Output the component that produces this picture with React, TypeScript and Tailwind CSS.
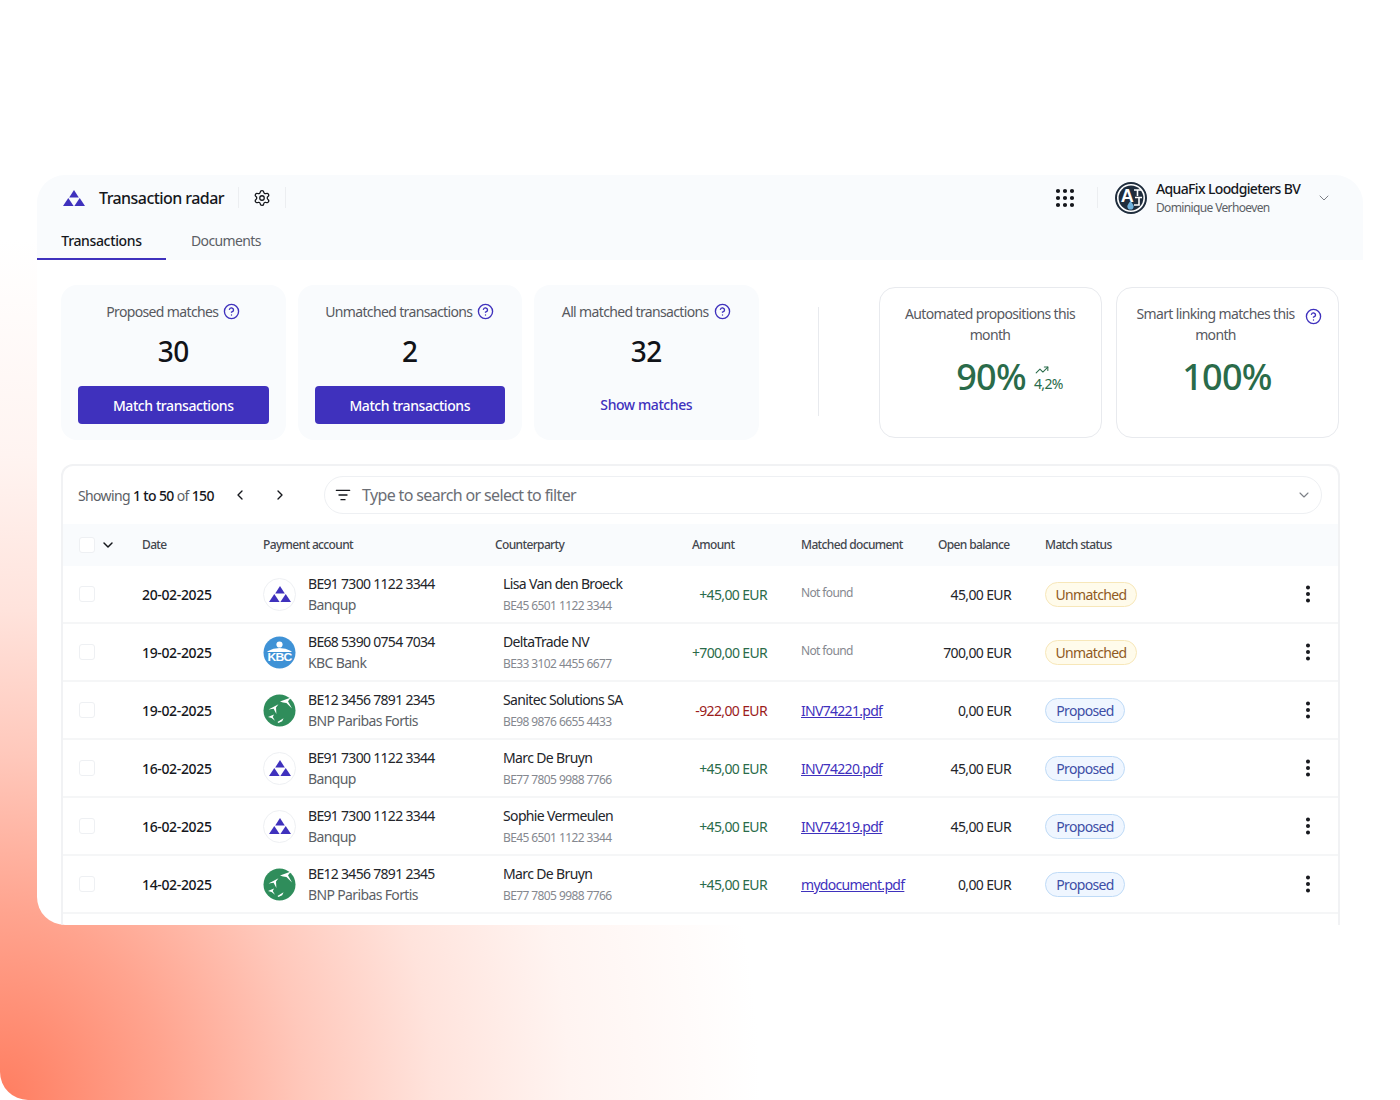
import { ChevronDown, ChevronLeft, ChevronRight, CircleHelp, EllipsisVertical, Grip, ListFilter, Settings, TrendingUp } from "lucide-react";

type Bank = "banqup" | "kbc" | "bnp";

type Row = {
  date: string;
  iban: string;
  bank: Bank;
  party: string;
  partyIban: string;
  amount: string;
  doc: string | null;
  balance: string;
  status: "Unmatched" | "Proposed";
};

const bankNames: Record<Bank, string> = {
  banqup: "Banqup",
  kbc: "KBC Bank",
  bnp: "BNP Paribas Fortis",
};

const rows: Row[] = [
  { date: "20-02-2025", iban: "BE91 7300 1122 3344", bank: "banqup", party: "Lisa Van den Broeck", partyIban: "BE45 6501 1122 3344", amount: "+45,00 EUR", doc: null, balance: "45,00 EUR", status: "Unmatched" },
  { date: "19-02-2025", iban: "BE68 5390 0754 7034", bank: "kbc", party: "DeltaTrade NV", partyIban: "BE33 3102 4455 6677", amount: "+700,00 EUR", doc: null, balance: "700,00 EUR", status: "Unmatched" },
  { date: "19-02-2025", iban: "BE12 3456 7891 2345", bank: "bnp", party: "Sanitec Solutions SA", partyIban: "BE98 9876 6655 4433", amount: "-922,00 EUR", doc: "INV74221.pdf", balance: "0,00 EUR", status: "Proposed" },
  { date: "16-02-2025", iban: "BE91 7300 1122 3344", bank: "banqup", party: "Marc De Bruyn", partyIban: "BE77 7805 9988 7766", amount: "+45,00 EUR", doc: "INV74220.pdf", balance: "45,00 EUR", status: "Proposed" },
  { date: "16-02-2025", iban: "BE91 7300 1122 3344", bank: "banqup", party: "Sophie Vermeulen", partyIban: "BE45 6501 1122 3344", amount: "+45,00 EUR", doc: "INV74219.pdf", balance: "45,00 EUR", status: "Proposed" },
  { date: "14-02-2025", iban: "BE12 3456 7891 2345", bank: "bnp", party: "Marc De Bruyn", partyIban: "BE77 7805 9988 7766", amount: "+45,00 EUR", doc: "mydocument.pdf", balance: "0,00 EUR", status: "Proposed" },
];

const columns = "grid grid-cols-[79px_121px_232px_197px_109px_137px_107px_1fr]";

function BanqupMark({ className }: { className: string }) {
  return (
    <svg viewBox="0 0 22 16" className={className} fill="#3f31bd">
      <polygon points="11,0 15.8,7.5 6.2,7.5" />
      <polygon points="5.3,8 10.6,16 0,16" />
      <polygon points="16.7,8 22,16 11.4,16" />
    </svg>
  );
}

function BankLogo({ bank }: { bank: Bank }) {
  if (bank === "banqup") {
    return (
      <div className="flex h-[33px] w-[33px] shrink-0 items-center justify-center rounded-full border border-[#eef0f3] bg-white">
        <BanqupMark className="h-[16px] w-[22px]" />
      </div>
    );
  }
  if (bank === "kbc") {
    return (
      <svg viewBox="0 0 33 33" className="h-[33px] w-[33px] shrink-0">
        <circle cx="16.5" cy="16.5" r="16" fill="#3f92d6" />
        <circle cx="16.5" cy="8.5" r="3.1" fill="#fff" />
        <path d="M4.5 15.2 Q16.5 9 28.5 15.2 L28.5 16 L4.5 16 Z" fill="#fff" />
        <text x="16.5" y="24.6" textAnchor="middle" textLength="24" lengthAdjust="spacingAndGlyphs" fontFamily="'Liberation Sans', sans-serif" fontWeight="700" fontSize="10" fill="#fff">KBC</text>
      </svg>
    );
  }
  return (
    <svg viewBox="0 0 33 33" className="h-[33px] w-[33px] shrink-0">
      <circle cx="16.5" cy="16.5" r="16" fill="#2f8d5b" />
      <g fill="#fff">
        <path d="M17 7.5 L28 3.5 L25 7.2 L29 14.5 L23.4 9 L20 8.6 Z" />
        <path d="M5.5 15.5 L15.5 10.2 L13 13.6 L13.4 20 L10.6 14.8 Z" />
        <path d="M5 23 L11 20.6 L9.8 23 L12 26.8 L8.6 24 Z" />
        <path d="M14.5 28 L20.5 24.2 L19.2 27.2 L15.4 29 Z" />
      </g>
    </svg>
  );
}

function AquaFixAvatar() {
  return (
    <svg viewBox="0 0 32 32" className="h-[32px] w-[32px] shrink-0">
      <circle cx="16" cy="16" r="15" fill="#fff" stroke="#1f2d3d" strokeWidth="2" />
      <circle cx="16" cy="16" r="12.4" fill="#1f2d3d" />
      <text x="12" y="20" textAnchor="middle" fontFamily="'Liberation Sans', sans-serif" fontWeight="700" fontSize="18" fill="#fff">A</text>
      <path d="M19 8 H26 M22.5 8 V14 M20 15.5 H27 M24 15.5 V23 H19" fill="none" stroke="#fff" strokeWidth="1.6" />
      <path d="M15.5 19 C17.6 21.6 18.6 23 18.6 24.4 A3.1 3.1 0 0 1 12.4 24.4 C12.4 23 13.4 21.6 15.5 19 Z" fill="#6fb1dc" />
    </svg>
  );
}

function Help({ className = "" }: { className?: string }) {
  return <CircleHelp className={`h-[17px] w-[17px] shrink-0 text-[#3f31bd] ${className}`} strokeWidth={1.9} />;
}

function StatCard({ title, value, action }: { title: string; value: string; action: "button" | "link" }) {
  return (
    <div className="flex h-[155px] w-[224.5px] shrink-0 flex-col items-center rounded-2xl bg-[#f9fbfd] px-[17px] pt-[15px]">
      <div className="flex h-[22px] items-center gap-[5px] text-[14px] text-[#57595f]">
        <span>{title}</span>
        <Help />
      </div>
      <div className="mt-[11px] h-[36px] text-[28px] leading-[36px] font-medium tracking-[-0.02em] text-[#111318]">{value}</div>
      {action === "button" ? (
        <button className="mt-[17px] h-[38px] w-full rounded-[4px] bg-[#3f31bd] text-[14px] font-medium tracking-[-0.03em] text-white">Match transactions</button>
      ) : (
        <div className="mt-[17px] flex h-[38px] items-center pb-[1px] text-[14px] font-medium tracking-[-0.03em] text-[#3f31bd]">Show matches</div>
      )}
    </div>
  );
}

function TableRow({ row }: { row: Row }) {
  const negative = row.amount.startsWith("-");
  return (
    <div className={`${columns} h-[58px] items-center border-b-2 border-[#f5f6f7] whitespace-nowrap`}>
      <div className="pl-[16px]">
        <div className="h-[16px] w-[16px] rounded-[3px] border border-[#eef0f3] bg-white" />
      </div>
      <div className="text-[14px] font-medium tracking-[-0.025em] text-[#15171c]">{row.date}</div>
      <div className="flex items-center gap-[12px]">
        <BankLogo bank={row.bank} />
        <div className="text-[14px] leading-[21px]">
          <div className="tracking-[-0.05em] text-[#23252a]">{row.iban}</div>
          <div className="text-[#5c5f66]">{bankNames[row.bank]}</div>
        </div>
      </div>
      <div className="pl-[8px]">
        <div className="text-[14px] leading-[21px] text-[#23252a]">{row.party}</div>
        <div className="pt-[1px] text-[12px] leading-[21px] tracking-[-0.05em] text-[#85888f]">{row.partyIban}</div>
      </div>
      <div className={`pr-[34px] text-right text-[14px] ${negative ? "text-[#9b1c1c]" : "text-[#2a6b4a]"}`}>{row.amount}</div>
      <div>
        {row.doc ? (
          <span className="text-[14px] tracking-[-0.05em] text-[#3f31bd] underline">{row.doc}</span>
        ) : (
          <span className="block pb-[3px] text-[12px] text-[#85888f]">Not found</span>
        )}
      </div>
      <div className="pr-[34px] text-right text-[14px] text-[#23252a]">{row.balance}</div>
      <div className="flex items-center justify-between pr-[19px]">
        {row.status === "Unmatched" ? (
          <span className="flex h-[25px] w-[92px] items-center justify-center rounded-full border border-[#f7e7b9] bg-[#fffbeb] text-[14px] text-[#8f5a24]">Unmatched</span>
        ) : (
          <span className="flex h-[25px] w-[80px] items-center justify-center rounded-full border border-[#bfdbf7] bg-[#eff6ff] text-[14px] text-[#3d4ea6]">Proposed</span>
        )}
        <EllipsisVertical className="h-[22px] w-[22px] text-[#15171c]" strokeWidth={2.4} />
      </div>
    </div>
  );
}

export default function App() {
  return (
    <div className="h-[1100px] w-[1400px] overflow-hidden rounded-bl-[28px] bg-[radial-gradient(ellipse_760px_860px_at_0%_100%,#ff7d60_0%,#ffa48f_22%,#ffc8bb_40%,#ffe3dc_57%,#fff4f1_75%,#ffffff_100%)] pt-[175px] pl-[37px] font-['Noto_Sans',sans-serif] tracking-[-0.04em]">
      <div className="h-[750px] w-[1326px] overflow-hidden rounded-t-[28px] rounded-bl-[28px] bg-white">
        <div className="h-[85px] bg-[#f9fbfd]">
          <div className="flex h-[45px] items-center">
            <BanqupMark className="ml-[26px] h-[16px] w-[22px]" />
            <span className="ml-[14px] text-[16px] font-medium tracking-[-0.035em] text-[#15171c]">Transaction radar</span>
            <div className="ml-[14px] h-[21px] w-px bg-[#eceef1]" />
            <Settings className="ml-[14px] h-[18px] w-[18px] text-[#15171c]" strokeWidth={1.7} />
            <div className="ml-[14px] h-[21px] w-px bg-[#eceef1]" />
            <Grip className="ml-auto h-[24px] w-[24px] text-[#15171c]" strokeWidth={2.2} />
            <div className="ml-[20px] h-[21px] w-px bg-[#eceef1]" />
            <div className="ml-[17px]">
              <AquaFixAvatar />
            </div>
            <div className="ml-[9px] w-[160px]">
              <div className="text-[14px] leading-[20px] font-medium text-[#15171c]">AquaFix Loodgieters BV</div>
              <div className="text-[12px] leading-[18px] text-[#5c5f66]">Dominique Verhoeven</div>
            </div>
            <ChevronDown className="mr-[31px] h-[16px] w-[16px] text-[#7c7f86]" strokeWidth={1.5} />
          </div>
          <div className="flex h-[40px]">
            <div className="flex w-[129px] items-center justify-center border-b-2 border-[#3f31bd] pt-[2px] text-[14px] font-medium tracking-[-0.025em] text-[#15171c]">Transactions</div>
            <div className="ml-[25px] flex items-center text-[14px] text-[#5c5f66]">Documents</div>
          </div>
        </div>

        <div className="flex items-start pt-[25px] pl-[24px]">
          <div className="flex gap-[12px]">
            <StatCard title="Proposed matches" value="30" action="button" />
            <StatCard title="Unmatched transactions" value="2" action="button" />
            <StatCard title="All matched transactions" value="32" action="link" />
          </div>
          <div className="mt-[22px] ml-[59px] h-[109px] w-px bg-[#e8eaee]" />
          <div className="mt-[2px] ml-[60px] flex gap-[14px]">
            <div className="flex h-[151px] w-[223px] flex-col items-center rounded-2xl border border-[#e8eaee] bg-white px-[20px] pt-[15px]">
              <div className="text-center text-[14px] leading-[21px] text-[#57595f]">Automated propositions this month</div>
              <div className="mt-[10px] ml-[39px] flex items-center gap-[8px]">
                <span className="text-[36px] leading-[44px] font-medium tracking-[-0.02em] text-[#2a6b4a]">90%</span>
                <div className="flex flex-col items-start text-[#2a6b4a]">
                  <TrendingUp className="ml-[1px] h-[14px] w-[14px]" strokeWidth={1.8} />
                  <span className="text-[14px] leading-[14px]">4,2%</span>
                </div>
              </div>
            </div>
            <div className="flex h-[151px] w-[223px] flex-col items-center rounded-2xl border border-[#e8eaee] bg-white pt-[15px]">
              <div className="flex w-full items-start pr-[16px] pl-[10px]">
                <div className="flex-1 text-center text-[14px] leading-[21px] text-[#57595f]">Smart linking matches this month</div>
                <Help className="mt-[5px]" />
              </div>
              <div className="mt-[10px] text-[36px] leading-[44px] font-medium tracking-[-0.02em] text-[#2a6b4a]">100%</div>
            </div>
          </div>
        </div>

        <div className="mt-[24px] ml-[24px] h-[470px] w-[1279px] rounded-t-xl border-2 border-b-0 border-[#f1f2f4]">
          <div className="flex h-[58px] items-center pr-[16px] pl-[15px]">
            <div className="w-[135px] text-[14px] whitespace-nowrap text-[#5c5f66]">
              Showing <span className="font-medium text-[#15171c]">1 to 50</span> of <span className="font-medium text-[#15171c]">150</span>
            </div>
            <ChevronLeft className="ml-[19px] h-[16px] w-[16px] text-[#15171c]" strokeWidth={2} />
            <ChevronRight className="ml-[24px] h-[16px] w-[16px] text-[#15171c]" strokeWidth={2} />
            <div className="ml-[36px] flex h-[38px] flex-1 items-center rounded-full border border-[#eef0f3] bg-white pr-[9px] pl-[10px]">
              <ListFilter className="h-[16px] w-[16px] text-[#15171c]" strokeWidth={2} />
              <span className="ml-[11px] flex-1 text-[16px] text-[#6b6e75]">Type to search or select to filter</span>
              <ChevronDown className="h-[16px] w-[16px] text-[#7c7f86]" strokeWidth={1.6} />
            </div>
          </div>
          <div className={`${columns} h-[42px] items-center bg-[#f9fbfd] pb-[1px] text-[12px] font-medium text-[#44474e]`}>
            <div className="flex items-center pl-[16px]">
              <div className="h-[16px] w-[16px] rounded-[3px] border border-[#eef0f3] bg-white" />
              <ChevronDown className="ml-[5px] h-[16px] w-[16px] text-[#15171c]" strokeWidth={2.2} />
            </div>
            <div>Date</div>
            <div>Payment account</div>
            <div>Counterparty</div>
            <div>Amount</div>
            <div>Matched document</div>
            <div>Open balance</div>
            <div>Match status</div>
          </div>
          {rows.map((row, i) => (
            <TableRow key={i} row={row} />
          ))}
        </div>
      </div>
    </div>
  );
}
